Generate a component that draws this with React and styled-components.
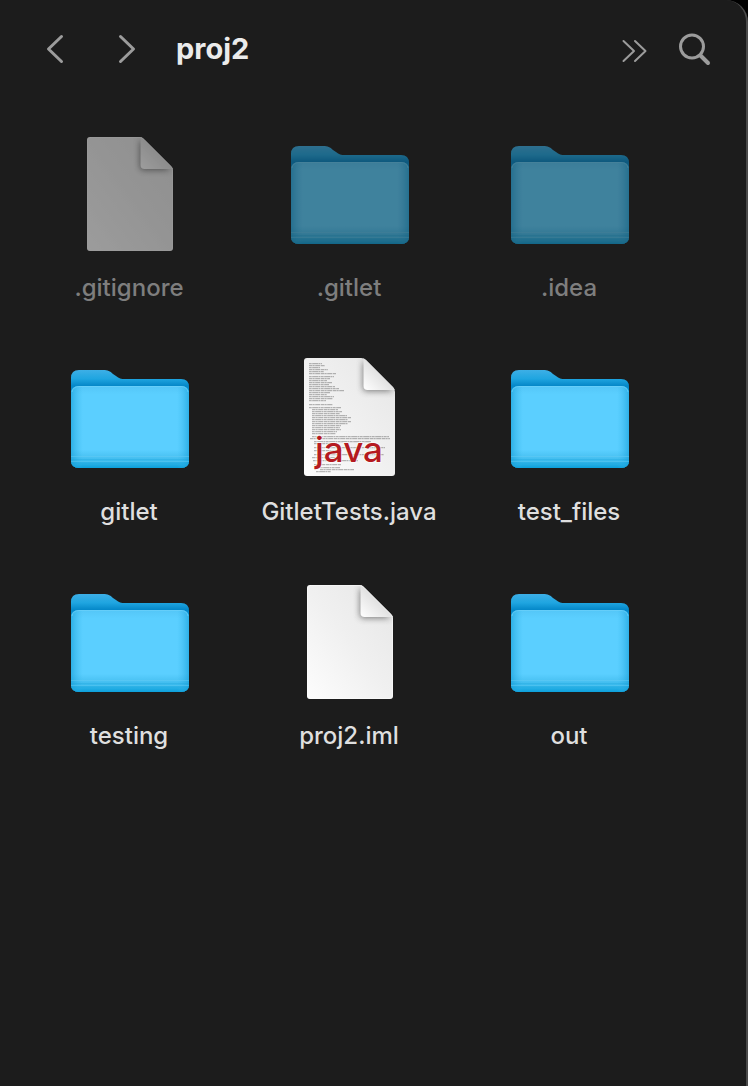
import React from "react";
import styled, { createGlobalStyle } from "styled-components";

const GlobalStyle = createGlobalStyle`
  *, *::before, *::after { box-sizing: border-box; }
  body { margin: 0; background: #000; font-family: Inter, "Liberation Sans", sans-serif; }
`;

const Window = styled.main`
  min-height: 100vh;
  background: #1c1c1c;
  border-right: 2px solid #4a4a4a;
  border-top-right-radius: 22px;
`;

const Toolbar = styled.header`
  display: flex;
  align-items: center;
  height: 98px;
  padding: 0 32px 0 35px;
`;

const ButtonGroup = styled.div`
  display: flex;
  gap: ${(p) => p.$gap}px;
`;

const IconButton = styled.button`
  display: grid;
  place-items: center;
  width: 40px;
  height: 40px;
  padding: 0;
  border: 0;
  background: none;
  color: #9c9c9c;
  cursor: pointer;
`;

const StrokeIcon = styled.svg`
  width: 40px;
  height: 40px;
  fill: none;
  stroke: currentColor;
  stroke-width: ${(p) => p.$weight}px;
  stroke-linecap: round;
  stroke-linejoin: round;
`;

const Title = styled.h1`
  flex: 1;
  margin: 0 0 0 29px;
  color: #ebebeb;
  font-size: 29px;
  font-weight: 700;
  line-height: 36px;
`;

const FileGrid = styled.ul`
  display: grid;
  grid-template-columns: repeat(auto-fill, 220px);
  row-gap: 50px;
  margin: 0;
  padding: 32px 20px;
  list-style: none;
`;

const FileTile = styled.button`
  display: flex;
  flex-direction: column;
  align-items: center;
  gap: 14px;
  width: 100%;
  padding: 0;
  border: 0;
  background: none;
  font-family: inherit;
  cursor: pointer;
`;

const Preview = styled.span`
  display: flex;
  opacity: ${(p) => (p.$hidden ? 0.57 : 1)};
`;

const Artwork = styled.svg`
  width: 128px;
  height: 128px;
  overflow: visible;
`;

const FileName = styled.span`
  padding-right: 2px;
  color: ${(p) => (p.$hidden ? "#7e7e7e" : "#dfdfdf")};
  font-size: 24px;
  font-weight: 500;
  line-height: 32px;
`;

const JavaMark = styled.text`
  fill: #b51a20;
  font-size: 35px;
  font-weight: 500;
  text-anchor: middle;
`;

const SharedDefs = styled.svg`
  display: block;
  width: 0;
  height: 0;
`;

function Gradients() {
  return (
    <SharedDefs aria-hidden="true">
      <defs>
        <linearGradient id="folderBack" x1="0" y1="0" x2="0" y2="1">
          <stop offset="0" stopColor="#3dafe6" />
          <stop offset="0.09" stopColor="#1fa5e0" />
          <stop offset="0.16" stopColor="#0588c9" />
          <stop offset="1" stopColor="#079fdd" />
        </linearGradient>
        <linearGradient id="folderFront" x1="0" y1="0" x2="0" y2="1">
          <stop offset="0" stopColor="#54c6f7" />
          <stop offset="0.1" stopColor="#5bcfff" />
          <stop offset="0.78" stopColor="#5bcfff" />
          <stop offset="0.87" stopColor="#49c1f2" />
          <stop offset="0.93" stopColor="#31b6ea" />
          <stop offset="1" stopColor="#0c9fda" />
        </linearGradient>
        <linearGradient id="folderSides" x1="0" y1="0" x2="1" y2="0">
          <stop offset="0" stopColor="#159fd9" stopOpacity="0.65" />
          <stop offset="0.1" stopColor="#35b5ea" stopOpacity="0" />
          <stop offset="0.9" stopColor="#35b5ea" stopOpacity="0" />
          <stop offset="1" stopColor="#159fd9" stopOpacity="0.65" />
        </linearGradient>
        <linearGradient id="paper" x1="1" y1="0" x2="0" y2="1">
          <stop offset="0" stopColor="#e6e6e6" />
          <stop offset="0.5" stopColor="#f0f0f0" />
          <stop offset="1" stopColor="#fdfdfd" />
        </linearGradient>
        <linearGradient id="fold" x1="1" y1="0" x2="0" y2="1">
          <stop offset="0.45" stopColor="#dedede" />
          <stop offset="1" stopColor="#ffffff" />
        </linearGradient>
        <filter id="foldShadow" x="-50%" y="-50%" width="200%" height="200%">
          <feGaussianBlur stdDeviation="3" />
        </filter>
      </defs>
    </SharedDefs>
  );
}

function FolderArt() {
  return (
    <Artwork viewBox="0 0 128 128" aria-hidden="true">
      <path
        d="M5 24q0-8 8-8h24c5 0 7 1 10 4l3 2c3 2.500 5 3 9 3h56q8 0 8 8v73q0 8-8 8H13q-8 0-8-8z"
        fill="url(#folderBack)"
      />
      <path
        d="M5 40q0-8 8-8h102q8 0 8 8v66q0 8-8 8H13q-8 0-8-8z"
        fill="url(#folderFront)"
      />
      <path
        d="M5 40q0-8 8-8h102q8 0 8 8v66q0 8-8 8H13q-8 0-8-8z"
        fill="url(#folderSides)"
      />
      <path d="M6 38q1-5.500 7-5.500h102q6 0 7 5.500" fill="none" stroke="#6fd2fb" strokeOpacity=".65" />
      <path d="M5 102.500h118M5 107.500h118" stroke="#65cdf5" strokeOpacity=".45" />
      <path d="M5 105.500h118M5 109h118" stroke="#169fd7" strokeOpacity=".25" />
    </Artwork>
  );
}

function DocumentArt() {
  return (
    <Artwork viewBox="0 0 128 128" aria-hidden="true">
      <clipPath id="docClip">
        <path d="M24 7h50q2 0 4 2l27 27q2 2 2 4v78q0 3-3 3H24q-3 0-3-3V10q0-3 3-3z" />
      </clipPath>
      <g clipPath="url(#docClip)">
        <path d="M21 7h86v114H21z" fill="url(#paper)" />
        <path d="M74 9v28q0 3 3 3h28z" fill="#444" opacity=".7" filter="url(#foldShadow)" />
        <path d="M74.500 6v29q0 4 4 4H108z" fill="url(#fold)" />
      </g>
      <path
        d="M24 7.500h50q2 0 4 2l26.500 26.500q2 2 2 4v77.500q0 3-3 3H24.500q-3 0-3-3V10.500q0-3 3-3z"
        fill="none"
        stroke="#fff"
        strokeOpacity=".45"
      />
    </Artwork>
  );
}

// Each entry is [indent, top, length] of one line of miniature source code.
const sourceLines = [
  [23, 9, 13], [23, 11, 16], [23, 13, 11], [23, 15, 19], [23, 17, 15], [23, 19, 27],
  [23, 22, 25], [23, 24, 21], [23, 26, 18], [23, 28, 23], [23, 30, 20], [23, 32, 26],
  [23, 34, 30], [23, 36, 35], [23, 38, 21], [23, 40, 18], [23, 42, 25], [23, 44, 24],
  [23, 46, 17], [23, 50, 24], [23, 53, 32], [26, 55, 26], [26, 57, 30], [26, 59, 28],
  [26, 61, 35], [26, 63, 39], [26, 65, 36], [26, 67, 39], [26, 69, 36], [26, 71, 29],
  [26, 73, 28], [26, 75, 29], [26, 77, 25], [26, 79, 24], [26, 82, 77], [24, 84, 80],
  [28, 87, 57], [28, 89, 23], [28, 93, 71], [28, 96, 28], [28, 100, 70], [26, 103, 28],
  [27, 106, 45], [28, 110, 27], [34, 113, 20], [34, 115, 34], [30, 117, 15],
];

function JavaArt() {
  return (
    <Artwork viewBox="0 0 128 128" aria-hidden="true">
      <clipPath id="javaClip">
        <path d="M21 4h54q3 0 5 2l27 27q2 2 2 5v81q0 3-3 3H21q-3 0-3-3V7q0-3 3-3z" />
      </clipPath>
      <g clipPath="url(#javaClip)">
        <path d="M18 4h91v118H18z" fill="url(#paper)" />
        {sourceLines.map(([x, y, length], i) => (
          <path
            key={y}
            d={`M${x} ${y}.700h${length}`}
            stroke="#555"
            strokeOpacity=".5"
            strokeDasharray={i % 2 ? "3.600 .4 1.700 .5 5.200 .6" : "2.700 .5 6.300 .4 1.600 .5"}
          />
        ))}
        <path d="M77 6v28q0 3 3 3h28z" fill="#444" opacity=".7" filter="url(#foldShadow)" />
        <path d="M77.500 3v29q0 4 4 4H110z" fill="url(#fold)" />
      </g>
      <JavaMark x="63" y="108" stroke="#fff" strokeOpacity=".6" strokeWidth="2" paintOrder="stroke">
        java
      </JavaMark>
    </Artwork>
  );
}

const artwork = { folder: FolderArt, document: DocumentArt, java: JavaArt };

const files = [
  { name: ".gitignore", kind: "document", hidden: true },
  { name: ".gitlet", kind: "folder", hidden: true },
  { name: ".idea", kind: "folder", hidden: true },
  { name: "gitlet", kind: "folder" },
  { name: "GitletTests.java", kind: "java" },
  { name: "test_files", kind: "folder" },
  { name: "testing", kind: "folder" },
  { name: "proj2.iml", kind: "document" },
  { name: "out", kind: "folder" },
];

export default function App() {
  return (
    <>
      <GlobalStyle />
      <Window>
        <Gradients />
        <Toolbar>
          <ButtonGroup $gap={32}>
            <IconButton aria-label="Back">
              <StrokeIcon viewBox="0 0 40 40" $weight={3}>
                <path d="M26.500 7.500 13.500 20 26.500 32.500" />
              </StrokeIcon>
            </IconButton>
            <IconButton aria-label="Forward">
              <StrokeIcon viewBox="0 0 40 40" $weight={3}>
                <path d="M13.500 7.500 26.500 20 13.500 32.500" />
              </StrokeIcon>
            </IconButton>
          </ButtonGroup>
          <Title>proj2</Title>
          <ButtonGroup $gap={20}>
            <IconButton aria-label="More toolbar items">
              <StrokeIcon viewBox="0 0 40 40" $weight={2}>
                <path d="M9.500 12 20 22 9.500 32M21 12 31.500 22 21 32" />
              </StrokeIcon>
            </IconButton>
            <IconButton aria-label="Search">
              <StrokeIcon viewBox="0 0 40 40" $weight={3}>
                <circle cx="18" cy="17.500" r="11.500" />
                <path d="m27 27 7 7" strokeWidth="4" />
              </StrokeIcon>
            </IconButton>
          </ButtonGroup>
        </Toolbar>
        <FileGrid>
          {files.map(({ name, kind, hidden }) => {
            const Art = artwork[kind];
            return (
              <li key={name}>
                <FileTile>
                  <Preview $hidden={hidden}>
                    <Art />
                  </Preview>
                  <FileName $hidden={hidden}>{name}</FileName>
                </FileTile>
              </li>
            );
          })}
        </FileGrid>
      </Window>
    </>
  );
}
